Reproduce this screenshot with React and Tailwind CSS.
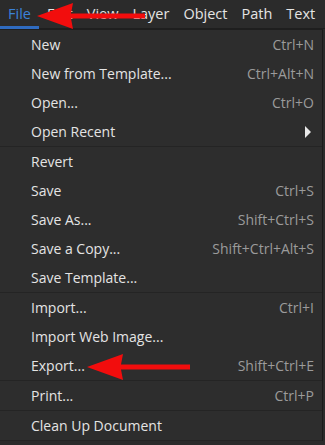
import React from 'react';

const font = { fontFamily: '"Open Sans", "Noto Sans", sans-serif' };

const groups = [
  [
    ['New', 'Ctrl+N'],
    ['New from Template...', 'Ctrl+Alt+N'],
    ['Open...', 'Ctrl+O'],
    ['Open Recent', 'sub'],
  ],
  [
    ['Revert', ''],
    ['Save', 'Ctrl+S'],
    ['Save As...', 'Shift+Ctrl+S'],
    ['Save a Copy...', 'Shift+Ctrl+Alt+S'],
    ['Save Template...', ''],
  ],
  [
    ['Import...', 'Ctrl+I'],
    ['Import Web Image...', ''],
    ['Export...', 'Shift+Ctrl+E'],
  ],
  [['Print...', 'Ctrl+P']],
  [['Clean Up Document', '']],
];

const tabs = ['Edit', 'View', 'Layer', 'Object', 'Path', 'Text'];

function Arrow({ className, width }) {
  return (
    <svg className={className} width={width} height="28" viewBox={`0 0 ${width} 28`}>
      <polygon
        points={`0,14 36,1 34,11.5 ${width},11.5 ${width},16.5 34,16.5 36,27`}
        fill="#f20d0d"
      />
    </svg>
  );
}

function Row({ label, shortcut }) {
  return (
    <div className="h-[29px] flex items-center justify-between pl-[31px] pr-[8px]">
      <span className="text-[#e4e4e4]">{label}</span>
      {shortcut === 'sub' ? (
        <svg width="8" height="12" viewBox="0 0 8 12" className="mr-[2px]">
          <polygon points="1,0 7,6 1,12" fill="#e8e8e8" />
        </svg>
      ) : (
        <span className="text-[#9b9b9b]">{shortcut}</span>
      )}
    </div>
  );
}

export default function App() {
  return (
    <div className="w-[325px] h-[445px] bg-[#2b2b2b] overflow-hidden relative text-[14px]" style={font}>
      <div className="h-[29px] flex items-end bg-[#2b2b2b] text-[14.5px]">
        <div className="w-[39px] h-full flex items-center pl-[8px] border-b-[3px] border-[#2f6bc0] pt-[2px]">
          <span className="text-[#3b82d9]">File</span>
        </div>
        <div className="flex-1 h-full flex items-center gap-[14px] pl-[8px] text-[#e4e4e4] border-b border-[#1e1e1e]">
          {tabs.map((t) => (
            <span key={t}>{t}</span>
          ))}
        </div>
      </div>
      <div className="w-[323px] bg-[#2d2d2d] border-r border-[#1b1b1b] border-t border-t-[#1e1e1e]">
        {groups.map((g, i) => (
          <div key={i} className="border-b border-[#242424]">
            {g.map(([l, s]) => (
              <Row key={l} label={l} shortcut={s} />
            ))}
          </div>
        ))}
      </div>
      <Arrow className="absolute left-[37px] top-[2px]" width={108} />
      <Arrow className="absolute left-[87px] top-[353px]" width={103} />
    </div>
  );
}
